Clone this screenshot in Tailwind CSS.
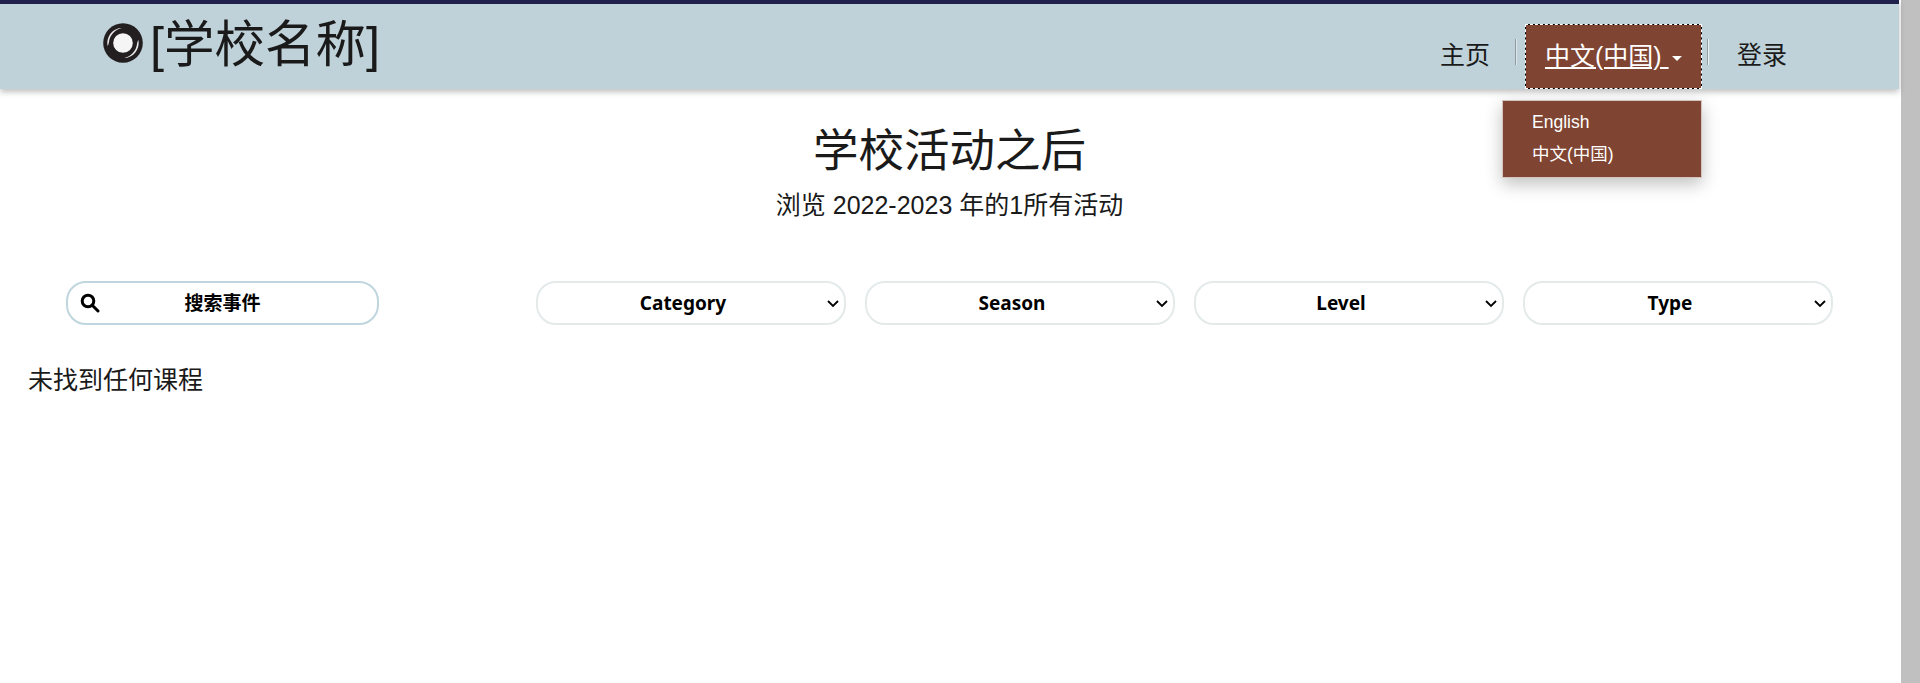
<!DOCTYPE html>
<html lang="en">
<head>
  <meta charset="UTF-8">
  <meta name="viewport" content="width=device-width, initial-scale=1.0"/>
  <title>学校活动之后</title>
  <script src="https://cdn.jsdelivr.net/npm/@tailwindcss/browser@4"></script>
</head>
<body class="h-[683px] overflow-hidden bg-white text-[#1a1a1a] font-['Liberation_Sans','Noto_Sans_CJK_SC',sans-serif]">
<div class="flex h-[683px]">
  <div class="w-[1899px] shrink-0">

    <!-- Header -->
    <header class="relative z-10 h-[89px] border-t-4 border-[#20204d] bg-[#bfd2d9] shadow-[0_3px_6px_rgba(0,0,0,0.25)] flex justify-between pl-[103px] pr-[112px]">
      <a class="flex items-start gap-[7px] pt-[19px]">
        <svg class="w-10 h-10" viewBox="0 0 40 40">
          <circle cx="20" cy="20" r="19.800" fill="#231f20"/>
          <circle cx="20" cy="20" r="9.800" fill="#f5f5f5"/>
          <path d="M4.500 23C3 13 10 5 19 5C12 6.500 6.800 12 6 19C5.800 20.500 5.300 22 4.500 23Z" fill="#e8e8e8"/>
          <path d="M35.500 17C37 27 30 35 21 35C28 33.500 33.200 28 34 21C34.200 19.500 34.700 18 35.500 17Z" fill="#e8e8e8"/>
        </svg>
        <span class="text-[50.500px] leading-[40px] mt-[2px]">[学校名称]</span>
      </a>
      <nav class="flex items-start pt-5 text-[25px]">
        <a class="mt-[15px] leading-8">主页</a>
        <span class="w-[2px] h-[26px] bg-[#8f9a9e] border-r border-[#dfe8eb] ml-[25px] mt-[15px]"></span>
        <a class="ml-[8px] w-[177px] h-[65px] border border-black outline outline-dashed outline-white outline-offset-[-1px] bg-[#804532] text-white flex items-center pl-[19px] relative">
          <span class="underline whitespace-pre">中文(中国) </span>
          <span class="ml-[3px] mt-1 border-x-[5px] border-t-[5px] border-x-transparent border-t-white"></span>
        </a>
        <span class="w-[2px] h-[26px] bg-[#f0f4f5] border-l border-[#8f9a9e] ml-[5px] mt-[15px]"></span>
        <a class="ml-[28px] mt-[15px] leading-8">登录</a>
      </nav>

      <!-- Language menu -->
      <div class="absolute top-[96px] left-[1502px] w-[200px] h-[78px] bg-[#804532] border border-[#d3c5c0] shadow-[0_6px_16px_rgba(0,0,0,0.25)] text-white text-[17.500px] pt-[5px] pl-[29px]">
        <div class="leading-8">English</div>
        <div class="leading-8">中文(中国)</div>
      </div>
    </header>

    <main>
      <div class="text-center pt-[31px]">
        <h1 class="text-[45.500px] leading-[64px]">学校活动之后</h1>
        <p class="text-[25px] leading-[32px] mt-[5px]">浏览 2022-2023 年的1所有活动</p>
      </div>

      <!-- Filters -->
      <div class="flex items-center mt-[60px] pl-[66px]">
        <label class="w-[313px] h-[44px] border-2 border-[#bfd6de] rounded-[20px] relative flex items-center justify-center">
          <svg class="absolute left-[12px] top-[10px] w-5 h-5" viewBox="0 0 20 20" fill="none" stroke="#000" stroke-width="3">
            <circle cx="8" cy="8" r="5.800"/>
            <path d="M12.500 12.500L18 18" stroke-linecap="round"/>
          </svg>
          <input class="w-full text-center text-[19px] font-bold outline-none placeholder:text-black font-['Noto_Sans','Noto_Sans_CJK_SC',sans-serif]" placeholder="搜索事件"/>
        </label>
        <div class="flex gap-[19px] ml-[157px]">
          <div class="relative">
            <select class="appearance-none w-[310px] h-[44px] pr-4 border-2 border-[#e4eaea] rounded-[20px] bg-white text-center text-[19px] font-bold text-black font-['Noto_Sans',sans-serif]"><option>Category</option></select>
            <svg class="absolute right-[6px] top-[18px] w-[14px] h-[9px] pointer-events-none" viewBox="0 0 14 9" fill="none" stroke="#000" stroke-width="1.800"><path d="M2 2L7 7L12 2"/></svg>
          </div>
          <div class="relative">
            <select class="appearance-none w-[310px] h-[44px] pr-4 border-2 border-[#e4eaea] rounded-[20px] bg-white text-center text-[19px] font-bold text-black font-['Noto_Sans',sans-serif]"><option>Season</option></select>
            <svg class="absolute right-[6px] top-[18px] w-[14px] h-[9px] pointer-events-none" viewBox="0 0 14 9" fill="none" stroke="#000" stroke-width="1.800"><path d="M2 2L7 7L12 2"/></svg>
          </div>
          <div class="relative">
            <select class="appearance-none w-[310px] h-[44px] pr-4 border-2 border-[#e4eaea] rounded-[20px] bg-white text-center text-[19px] font-bold text-black font-['Noto_Sans',sans-serif]"><option>Level</option></select>
            <svg class="absolute right-[6px] top-[18px] w-[14px] h-[9px] pointer-events-none" viewBox="0 0 14 9" fill="none" stroke="#000" stroke-width="1.800"><path d="M2 2L7 7L12 2"/></svg>
          </div>
          <div class="relative">
            <select class="appearance-none w-[310px] h-[44px] pr-4 border-2 border-[#e4eaea] rounded-[20px] bg-white text-center text-[19px] font-bold text-black font-['Noto_Sans',sans-serif]"><option>Type</option></select>
            <svg class="absolute right-[6px] top-[18px] w-[14px] h-[9px] pointer-events-none" viewBox="0 0 14 9" fill="none" stroke="#000" stroke-width="1.800"><path d="M2 2L7 7L12 2"/></svg>
          </div>
        </div>
      </div>

      <p class="text-[25px] leading-9 mt-[37px] pl-[28px]">未找到任何课程</p>
    </main>
  </div>

  <!-- Scrollbar -->
  <div class="ml-[2px] flex-1 bg-[#c0c0c0]"></div>
</div>
</body>
</html>
